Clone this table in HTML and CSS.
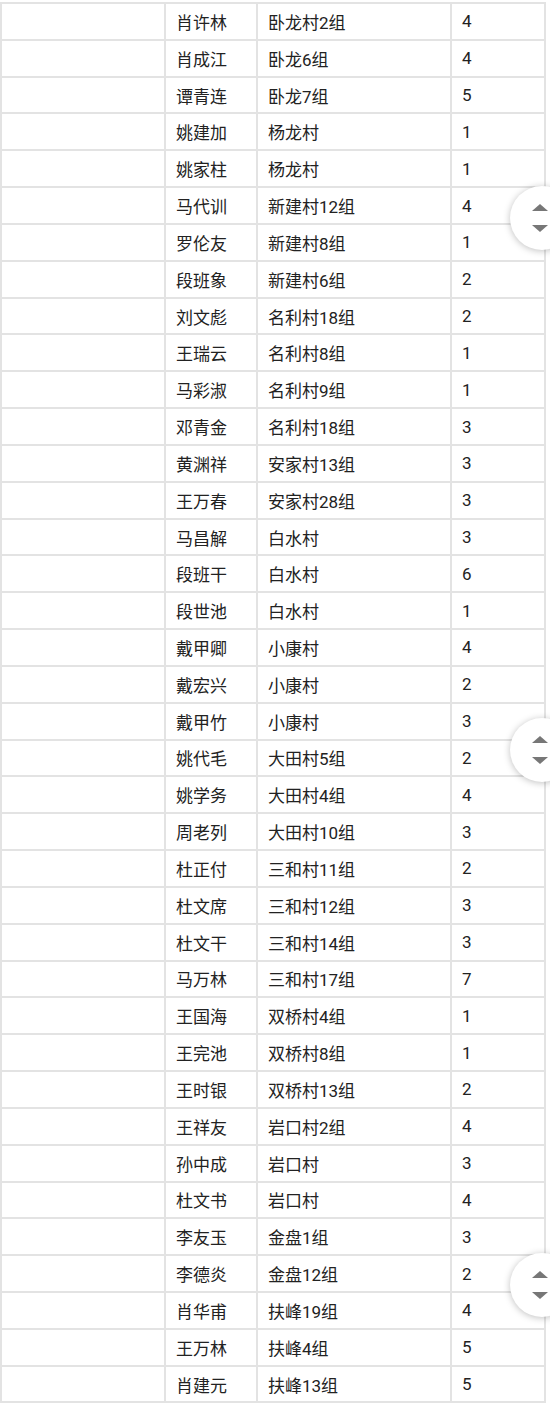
FILE: index.html
```html
<!doctype html>
<html lang="zh-CN">
  <head>
    <meta charset="UTF-8" />
    <meta name="viewport" content="width=device-width, initial-scale=1.0" />
    <title>名单</title>
    <link rel="stylesheet" href="styles.css">
  </head>
  <body>
    <div class="sheet" id="sheet"></div>

    <div class="scroll-btn" style="top: 186px"><span class="arrow-up"></span><span class="arrow-down"></span></div>
    <div class="scroll-btn" style="top: 718px"><span class="arrow-up"></span><span class="arrow-down"></span></div>
    <div class="scroll-btn" style="top: 1253px"><span class="arrow-up"></span><span class="arrow-down"></span></div>

    <script>
      // name, village, count
      const rows = [
        ['肖许林', '卧龙村2组', 4],
        ['肖成江', '卧龙6组', 4],
        ['谭青连', '卧龙7组', 5],
        ['姚建加', '杨龙村', 1],
        ['姚家柱', '杨龙村', 1],
        ['马代训', '新建村12组', 4],
        ['罗伦友', '新建村8组', 1],
        ['段班象', '新建村6组', 2],
        ['刘文彪', '名利村18组', 2],
        ['王瑞云', '名利村8组', 1],
        ['马彩淑', '名利村9组', 1],
        ['邓青金', '名利村18组', 3],
        ['黄渊祥', '安家村13组', 3],
        ['王万春', '安家村28组', 3],
        ['马昌解', '白水村', 3],
        ['段班干', '白水村', 6],
        ['段世池', '白水村', 1],
        ['戴甲卿', '小康村', 4],
        ['戴宏兴', '小康村', 2],
        ['戴甲竹', '小康村', 3],
        ['姚代毛', '大田村5组', 2],
        ['姚学务', '大田村4组', 4],
        ['周老列', '大田村10组', 3],
        ['杜正付', '三和村11组', 2],
        ['杜文席', '三和村12组', 3],
        ['杜文干', '三和村14组', 3],
        ['马万林', '三和村17组', 7],
        ['王国海', '双桥村4组', 1],
        ['王完池', '双桥村8组', 1],
        ['王时银', '双桥村13组', 2],
        ['王祥友', '岩口村2组', 4],
        ['孙中成', '岩口村', 3],
        ['杜文书', '岩口村', 4],
        ['李友玉', '金盘1组', 3],
        ['李德炎', '金盘12组', 2],
        ['肖华甫', '扶峰19组', 4],
        ['王万林', '扶峰4组', 5],
        ['肖建元', '扶峰13组', 5]
      ];

      const sheet = document.getElementById('sheet');
      rows.forEach(function (r) {
        ['', r[0], r[1], r[2]].forEach(function (value) {
          const cell = document.createElement('div');
          cell.className = 'cell';
          cell.textContent = value;
          sheet.appendChild(cell);
        });
      });
    </script>
  </body>
</html>
```

FILE: styles.css
```css
html,
body {
  margin: 0;
  padding: 0;
  background-color: #fff;
  overflow: hidden;
}
body {
  font-family: Roboto, 'Noto Sans CJK SC', sans-serif;
  font-size: 17px;
  color: #222;
}
.sheet {
  display: grid;
  grid-template-columns: 164px 92px 194px 94px;
  grid-auto-rows: 36.84px;
  width: 546px;
  margin-top: 2px;
  border-left: 2px solid #e3e3e3;
  border-top: 2px solid #e3e3e3;
  box-sizing: border-box;
}
.cell {
  display: flex;
  align-items: center;
  padding-left: 10px;
  border-right: 2px solid #e3e3e3;
  border-bottom: 2px solid #e3e3e3;
  box-sizing: border-box;
  white-space: nowrap;
}
.scroll-btn {
  position: absolute;
  left: 510px;
  width: 64px;
  height: 64px;
  border-radius: 50%;
  background-color: #fff;
  box-shadow: 0 1px 7px rgba(0, 0, 0, 0.25);
}
.arrow-up,
.arrow-down {
  position: absolute;
  left: 22px;
  width: 0;
  height: 0;
  border-left: 8px solid transparent;
  border-right: 8px solid transparent;
}
.arrow-up {
  top: 18px;
  border-bottom: 7px solid #777;
}
.arrow-down {
  top: 39px;
  border-top: 7px solid #777;
}
```
